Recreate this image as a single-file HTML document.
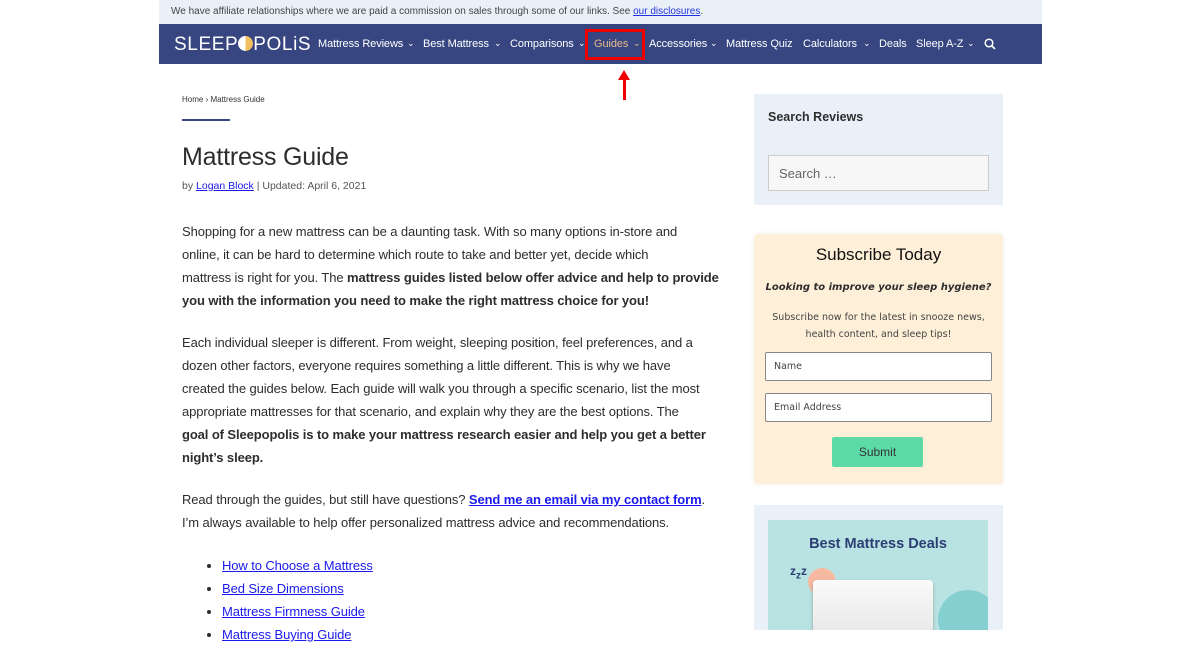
<!DOCTYPE html>
<html><head><meta charset="utf-8"><style>
*{margin:0;padding:0;box-sizing:border-box}
body{width:1200px;height:630px;overflow:hidden;background:#fff;font-family:"Liberation Sans",sans-serif;color:#2d2d2d;position:relative}
.top{position:absolute;left:159px;top:0;width:883px;height:24px;background:#e9f0f7;font-size:10px;color:#444;padding:6px 12px}
.top a{color:#2233dd;text-decoration:underline}
.nav{position:absolute;left:159px;top:24px;width:883px;height:40px;background:#374680;color:#fff}
.logo{position:absolute;left:15px;top:10px;font-size:19px;letter-spacing:0.6px;color:#fff}
.n{position:absolute;top:38px;font-size:11px;color:#fff;white-space:nowrap;letter-spacing:-0.1px}
.c{position:absolute;top:38px;font-size:9px;color:#fff}
.box{position:absolute;left:585px;top:29px;width:60px;height:31px;border:3px solid #e00}
.main{position:absolute;left:182px}
a{color:#1a1aee;text-decoration:underline}
p.t{font-size:13px;line-height:23px;width:600px;white-space:nowrap;letter-spacing:-0.1px}
ul{position:absolute;left:222px;font-size:13px;line-height:23px;letter-spacing:-0.1px}
</style></head><body>
<div class="top">We have affiliate relationships where we are paid a commission on sales through some of our links. See <a>our disclosures</a>.</div>
<div class="nav">
<div class="logo">SLEEP<span style="display:inline-block;width:15px;height:15px;border-radius:50%;background:linear-gradient(90deg,#fff 50%,#f2c060 50%);vertical-align:-1px"></span>POLiS</div>
</div>
<div class="n" style="left:318px">Mattress Reviews</div><div class="c" style="left:407px">⌄</div>
<div class="n" style="left:423px">Best Mattress</div><div class="c" style="left:494px">⌄</div>
<div class="n" style="left:510px">Comparisons</div><div class="c" style="left:578px">⌄</div>
<div class="n" style="left:594px;color:#e8b98a">Guides</div><div class="c" style="left:633px;color:#e8b98a">⌄</div>
<div class="n" style="left:649px">Accessories</div><div class="c" style="left:710px">⌄</div>
<div class="n" style="left:726px">Mattress Quiz</div>
<div class="n" style="left:803px">Calculators</div><div class="c" style="left:863px">⌄</div>
<div class="n" style="left:879px">Deals</div>
<div class="n" style="left:916px">Sleep A-Z</div><div class="c" style="left:967px">⌄</div>
<svg style="position:absolute;left:984px;top:38px" width="12" height="12"><circle cx="5" cy="5" r="3.8" fill="none" stroke="#fff" stroke-width="1.5"/><line x1="8" y1="8" x2="11" y2="11" stroke="#fff" stroke-width="1.6"/></svg>
<div class="box"></div>
<div style="position:absolute;left:623px;top:78px;width:3px;height:22px;background:#e00"></div>
<div style="position:absolute;left:618px;top:70px;border-left:6px solid transparent;border-right:6px solid transparent;border-bottom:10px solid #e00"></div>
<div class="main" style="top:95px;font-size:8px;color:#333">Home › Mattress Guide</div>
<div class="main" style="top:119px;width:48px;height:2px;background:#374680"></div>
<div class="main" style="top:143px;font-size:25px;color:#2d2d2d;letter-spacing:-0.2px">Mattress Guide</div>
<div class="main" style="top:180px;font-size:10.5px;color:#555">by <a>Logan Block</a> | Updated: April 6, 2021</div>
<p class="t main" style="top:220px">Shopping for a new mattress can be a daunting task. With so many options in-store and<br>online, it can be hard to determine which route to take and better yet, decide which<br>mattress is right for you. The <b>mattress guides listed below offer advice and help to provide<br>you with the information you need to make the right mattress choice for you!</b></p>
<p class="t main" style="top:331px">Each individual sleeper is different. From weight, sleeping position, feel preferences, and a<br>dozen other factors, everyone requires something a little different. This is why we have<br>created the guides below. Each guide will walk you through a specific scenario, list the most<br>appropriate mattresses for that scenario, and explain why they are the best options. The<br><b>goal of Sleepopolis is to make your mattress research easier and help you get a better<br>night’s sleep.</b></p>
<p class="t main" style="top:488px">Read through the guides, but still have questions? <a><b>Send me an email via my contact form</b></a>.<br>I’m always available to help offer personalized mattress advice and recommendations.</p>
<ul style="top:554px"><li><a>How to Choose a Mattress</a></li><li><a>Bed Size Dimensions</a></li><li><a>Mattress Firmness Guide</a></li><li><a>Mattress Buying Guide</a></li></ul>
<div style="position:absolute;left:754px;top:94px;width:249px;height:111px;background:#e9f0f7">
<div style="position:absolute;left:14px;top:16px;font-size:12.5px;font-weight:bold">Search Reviews</div>
<div style="position:absolute;left:14px;top:61px;width:221px;height:36px;border:1px solid #ccc;background:#f7f7f7;font-size:13px;color:#666;padding:10px">Search …</div>
</div>
<div style="position:absolute;left:754px;top:234px;width:249px;height:250px;background:#feefd9;border-radius:4px;box-shadow:0 0 6px #eee;font-family:'DejaVu Sans',sans-serif;text-align:center">
<div style="position:absolute;left:0;width:249px;top:11px;font-family:'Liberation Sans';font-size:17px;color:#111">Subscribe Today</div>
<div style="position:absolute;left:0;width:249px;top:48px;font-size:10px;font-weight:bold;font-style:italic">Looking to improve your sleep hygiene?</div>
<div style="position:absolute;left:0;width:249px;top:75px;font-size:9.5px;line-height:17px;color:#444">Subscribe now for the latest in snooze news,<br>health content, and sleep tips!</div>
<div style="position:absolute;left:11px;top:118px;width:227px;height:29px;background:#fff;border:1px solid #888;border-radius:2px;font-size:9.5px;text-align:left;padding:8px;color:#444">Name</div>
<div style="position:absolute;left:11px;top:159px;width:227px;height:29px;background:#fff;border:1px solid #888;border-radius:2px;font-size:9.5px;text-align:left;padding:8px;color:#444">Email Address</div>
<div style="position:absolute;left:78px;top:203px;width:91px;height:30px;background:#5cdba6;border-radius:2px;font-family:'Liberation Sans';font-size:12px;padding-top:8px;color:#333">Submit</div>
</div>
<div style="position:absolute;left:754px;top:505px;width:249px;height:125px;background:#e9f0f7">
<div style="position:absolute;left:14px;top:15px;width:220px;height:110px;background:#b9e3e3;overflow:hidden">
<div style="position:absolute;left:0;width:220px;top:16px;text-align:center;font-weight:bold;font-size:14.5px;color:#2c3e73">Best Mattress Deals</div>
<div style="position:absolute;left:40px;top:48px;width:28px;height:28px;border-radius:50%;background:#f7b9a0"></div>
<div style="position:absolute;left:170px;top:70px;width:60px;height:60px;border-radius:50%;background:#86cfd0"></div>
<div style="position:absolute;left:22px;top:44px;font-weight:bold;font-size:12px;color:#2c3e73">z<sub>z</sub>z</div>
<div style="position:absolute;left:45px;top:60px;width:120px;height:60px;background:linear-gradient(#fafafa,#e6e6e6);border-radius:4px;box-shadow:0 2px 3px #999"></div>
</div></div>
</body></html>
